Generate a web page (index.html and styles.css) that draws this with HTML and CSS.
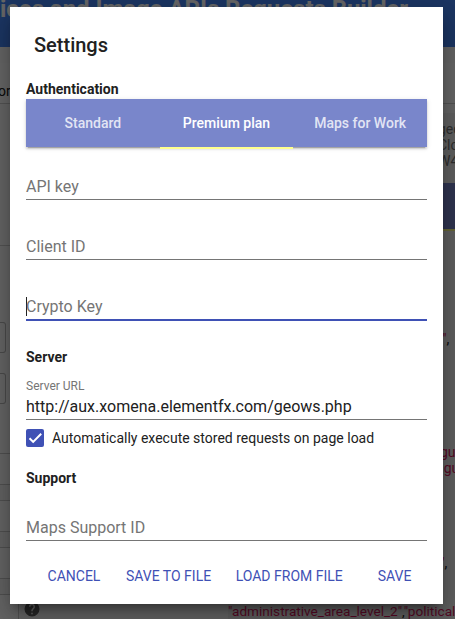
FILE: index.html
```html
<!DOCTYPE html>
<html lang="en">
<head>
<meta charset="utf-8">
<title>Settings</title>
<link rel="stylesheet" href="styles.css">
</head>
<body>
<div class="page">
  <header class="app-header">ices and Image APIs Requests Builder</header>
  <main class="workspace">
    <section class="form-pane">
      <div class="pane-title">orm</div>
      <div class="pane-intro"></div>
      <div class="pane-fields"><div class="box"></div><div class="box"></div></div>
      <div class="row"></div><div class="row gap"></div>
      <div class="row"></div><div class="row gap"></div>
      <div class="row"></div><div class="row gap"></div>
      <div class="row help-row"><svg class="help" viewBox="0 0 24 24"><path d="M12 2a10 10 0 1 0 0 20 10 10 0 0 0 0-20zm1 17h-2v-2h2v2zm2.1-7.700-.9.900C13.400 12.900 13 13.500 13 15h-2v-.5c0-1.100.4-2.100 1.200-2.800l1.200-1.300A2 2 0 1 0 10 9H8a4 4 0 1 1 7.100 2.300z"/></svg></div>
    </section>
    <section class="result-pane">
      <div class="pane-title"></div>
      <div class="notes"><div>ged</div><div>Clo</div><div>W4</div></div>
      <div class="result-tabs"></div>
      <div class="code">
        <div class="line first"><b>"</b>,</div>
        <div class="line second"><b>gu</b></div>
        <div class="line third"><b>ngu</b></div>
        <div class="line fourth"><b>"</b>,</div>
        <div class="line last"><b>"administrative_area_level_2"</b>,<b>"political</b></div>
      </div>
    </section>
  </main>
</div>
<div class="backdrop"></div>
<div class="dialog" role="dialog" aria-labelledby="title">
  <h2 id="title">Settings</h2>
  <div class="content">
    <h3>Authentication</h3>
    <div class="tabs">
      <div class="tab">Standard</div>
      <div class="tab active">Premium plan</div>
      <div class="tab">Maps for Work</div>
    </div>
    <div class="field api"><span>API key</span></div>
    <div class="field"><span>Client ID</span></div>
    <div class="field focused"><span>Crypto Key</span></div>
    <h3 class="server">Server</h3>
    <div class="label">Server URL</div>
    <div class="field filled"><span>http://aux.xomena.elementfx.com/geows.php</span></div>
    <div class="check-row">
      <svg class="check" viewBox="0 0 18 18"><rect width="18" height="18" rx="2"/><path d="M3.500 9.200l3.700 3.700 8-8.200"/></svg>
      <span>Automatically execute stored requests on page load</span>
    </div>
    <h3 class="support">Support</h3>
    <div class="field support-id"><span>Maps Support ID</span></div>
  </div>
  <div class="actions">
    <span class="cancel">Cancel</span><span class="to-file">Save to file</span><span class="from-file">Load from file</span><span>Save</span>
  </div>
</div>
</body>
</html>
```
FILE: styles.css
```css
* { box-sizing: border-box; }
body {
  margin: 0;
  height: 619px;
  overflow: hidden;
  font-family: Roboto, "Liberation Sans", sans-serif;
  font-size: 14px;
  color: #212121;
}
.page { height: 619px; overflow: hidden; background: #fff; }
.app-header {
  height: 47px;
  background: #4688f8;
  color: #fff;
  font-size: 24px;
  font-weight: 700;
  line-height: 18px;
  letter-spacing: -.05px;
  white-space: nowrap;
}
.workspace {
  display: grid;
  grid-template-columns: 228px 1fr;
  padding-top: 16px;
  background: #fdfdfd;
}
.pane-title {
  height: 41px;
  padding-top: 20px;
  line-height: 16px;
  border-bottom: 1px solid #d0d0d0;
  background: #fff;
}
.form-pane { height: 556px; }
.form-pane .pane-title { text-indent: -2px; }
.pane-intro { height: 142px; border-bottom: 1px solid #d0d0d0; }
.pane-fields {
  height: 208px;
  padding-top: 76px;
  border-bottom: 1px solid #c8c8c8;
}
.box {
  width: 6px;
  height: 31px;
  margin-bottom: 20px;
  border: 1px solid #bbb;
  border-left: 0;
  border-radius: 0 3px 3px 0;
}
.row { height: 31px; border-bottom: 1px solid #c8c8c8; }
.row.gap { height: 16px; background: #f6f6f6; }
.help-row { margin-left: 18px; padding: 5px 4px; border-left: 1px solid #ccc; }
.help { display: block; width: 18px; height: 18px; fill: #616161; }
.result-pane { min-width: 0; }
.notes {
  height: 79px;
  margin-top: 9px;
  padding: 8px 0 0 210px;
  background: #f0f0f0;
  color: #777;
  line-height: 16px;
  overflow: hidden;
}
.result-tabs { height: 48px; margin-top: -9px; background: #7986cb; border-bottom: 2px solid #ffff8d; }
.code { height: 388px; background: #f0f0f0; white-space: nowrap; overflow: hidden; }
.code b { color: #d81b60; font-weight: 400; }
.line { height: 16px; line-height: 16px; }
.first { padding-left: 214px; margin-top: 100px; }
.second { padding-left: 212px; margin-top: 97px; }
.third { padding-left: 208px; }
.fourth { padding-left: 212px; margin-top: 79px; }
.last { margin-top: 32px; font-size: 13.6px; }
.backdrop { position: absolute; inset: 0; background: rgba(0, 0, 0, .6); }
.dialog {
  position: absolute;
  left: 10px;
  top: 7px;
  width: 433px;
  height: 597px;
  background: #fff;
  box-shadow: 0 16px 24px 2px rgba(0,0,0,.14), 0 6px 30px 5px rgba(0,0,0,.12), 0 8px 10px -5px rgba(0,0,0,.4);
}
h2 { margin: 0; padding: 24px 24px 0; height: 74px; font-size: 20px; font-weight: 500; line-height: 28px; }
.content { padding: 0 16px; }
h3 { margin: 0; height: 18px; font-size: 14px; font-weight: 700; line-height: 16px; }
.tabs {
  display: grid;
  grid-template-columns: repeat(3, 1fr);
  height: 48px;
  background: #7986cb;
  box-shadow: 0 2px 2px rgba(0,0,0,.14), 0 1px 5px rgba(0,0,0,.12), 0 3px 1px -2px rgba(0,0,0,.2);
}
.tab { color: rgba(255,255,255,.8); font-weight: 500; line-height: 48px; text-align: center; }
.active { color: #fff; border-bottom: 2px solid #ffff8d; }
.field {
  height: 25px;
  margin-top: 35px;
  border-bottom: 1px solid #757575;
  color: #757575;
  font-size: 16px;
  line-height: 24px;
}
.api { margin-top: 28px; }
.focused { height: 26px; padding-top: 2px; border-bottom: 2px solid #3f51b5; }
.focused span {
  display: block;
  height: 19px;
  line-height: 20px;
  border-left: 1px solid #212121;
  text-indent: -1px;
}
.server { margin-top: 28px; }
.label { margin-top: 11px; height: 17px; color: #757575; font-size: 12px; line-height: 16px; }
.filled { margin-top: 0; color: #212121; }
.check-row { display: flex; align-items: center; gap: 8px; height: 18px; margin-top: 9px; }
.check { width: 18px; height: 18px; fill: #3f51b5; }
.check path { fill: none; stroke: #fff; stroke-width: 2; }
.support { margin-top: 23px; }
.support-id { margin-top: 28px; }
.actions {
  display: flex;
  justify-content: flex-end;
  padding: 27px 31.5px 0 0;
  color: #3f51b5;
  line-height: 16px;
  text-transform: uppercase;
}
.cancel { margin-right: 25.5px; }
.to-file { margin-right: 24.5px; }
.from-file { margin-right: 35px; }
```
